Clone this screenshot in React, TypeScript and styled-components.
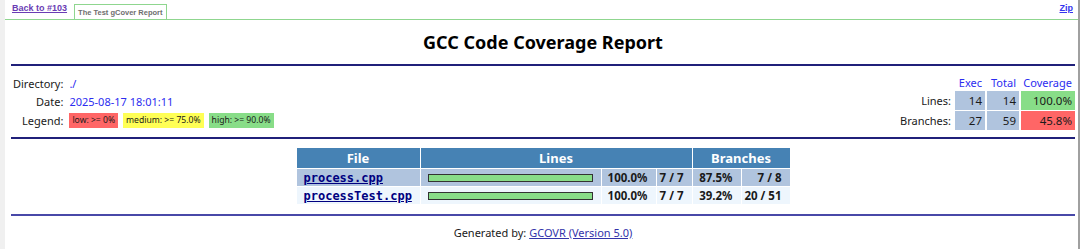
import React from 'react';
import styled, { createGlobalStyle } from 'styled-components';

const GlobalStyle = createGlobalStyle`
  html, body {
    margin: 0;
    padding: 0;
    background: #ffffff;
  }
`;

type FileRow = {
  name: string;
  linePct: string;
  lineCount: string;
  branchPct: string;
  branchCount: string;
};

const files: FileRow[] = [
  { name: 'process.cpp', linePct: '100.0%', lineCount: '7 / 7', branchPct: '87.5%', branchCount: '7 / 8' },
  { name: 'processTest.cpp', linePct: '100.0%', lineCount: '7 / 7', branchPct: '39.2%', branchCount: '20 / 51' },
];

export default function App() {
  return (
    <>
      <GlobalStyle />
      <Frame>
        <LeftStrip />
        <Main>
          <TopBar>
            <BackLink href="#">Back to #103</BackLink>
            <Tab>The Test gCover Report</Tab>
            <ZipLink href="#">Zip</ZipLink>
          </TopBar>
          <Report>
            <Title>GCC Code Coverage Report</Title>
            <Rule />
            <InfoSection>
              <InfoGrid>
                <InfoLabel>Directory:</InfoLabel>
                <InfoValue>./</InfoValue>
                <InfoLabel>Date:</InfoLabel>
                <InfoValue>2025-08-17 18:01:11</InfoValue>
                <InfoLabel>Legend:</InfoLabel>
                <LegendRow>
                  <LegendBox $level="low">low: &gt;= 0%</LegendBox>
                  <LegendBox $level="medium">medium: &gt;= 75.0%</LegendBox>
                  <LegendBox $level="high">high: &gt;= 90.0%</LegendBox>
                </LegendRow>
              </InfoGrid>
              <StatsGrid>
                <span />
                <StatHead>Exec</StatHead>
                <StatHead>Total</StatHead>
                <StatHead>Coverage</StatHead>
                <StatLabel>Lines:</StatLabel>
                <StatCell>14</StatCell>
                <StatCell>14</StatCell>
                <StatCell $level="high">100.0%</StatCell>
                <StatLabel>Branches:</StatLabel>
                <StatCell>27</StatCell>
                <StatCell>59</StatCell>
                <StatCell $level="low">45.8%</StatCell>
              </StatsGrid>
            </InfoSection>
            <Rule />
            <FileTable>
              <thead>
                <tr>
                  <HeadCell>File</HeadCell>
                  <HeadCell colSpan={3}>Lines</HeadCell>
                  <HeadCell colSpan={2}>Branches</HeadCell>
                </tr>
              </thead>
              <tbody>
                {files.map((f, i) => (
                  <FileTr key={f.name} $odd={i % 2 === 0}>
                    <NameCell>
                      <FileLink href="#">{f.name}</FileLink>
                    </NameCell>
                    <BarCell>
                      <Bar />
                    </BarCell>
                    <NumCell $w={54}>{f.linePct}</NumCell>
                    <NumCell $w={35}>{f.lineCount}</NumCell>
                    <NumCell $w={48}>{f.branchPct}</NumCell>
                    <NumCell $w={48}>{f.branchCount}</NumCell>
                  </FileTr>
                ))}
              </tbody>
            </FileTable>
            <Rule $bottom />
            <Footer>
              Generated by: <FooterLink href="#">GCOVR (Version 5.0)</FooterLink>
            </Footer>
          </Report>
        </Main>
        <RightEdge />
      </Frame>
    </>
  );
}

const Frame = styled.div`
  display: flex;
  height: 249px;
  overflow: hidden;
`;

const LeftStrip = styled.div`
  width: 5px;
  background: #f0f0f0;
`;

const RightEdge = styled.div`
  width: 2px;
  background: #a0a0a0;
`;

const Main = styled.div`
  flex: 1;
  display: flex;
  flex-direction: column;
`;

const TopBar = styled.div`
  height: 19px;
  display: flex;
  align-items: flex-start;
  padding: 0 5px 0 7px;
  border-bottom: 1px solid #8fd68f;
  font-family: 'Liberation Sans', Arial, sans-serif;
  font-weight: bold;
`;

const BackLink = styled.a`
  margin-top: 3px;
  font-size: 9px;
  color: #6a3cb4;
  text-decoration: underline;
`;

const Tab = styled.div`
  margin: 4px 0 0 7px;
  height: 15px;
  box-sizing: border-box;
  border: 1px solid #8fd68f;
  border-bottom: none;
  padding: 3px 3px 0;
  font-size: 7.5px;
  color: #6e6e6e;
`;

const ZipLink = styled.a`
  margin: 3px 0 0 auto;
  font-size: 9px;
  color: #3434ee;
  text-decoration: underline;
`;

const Report = styled.div`
  padding: 0 3px 0 6px;
  font-family: 'Noto Sans', sans-serif;
  font-size: 11px;
  color: #1a1a1a;
`;

const Title = styled.h1`
  margin: 0;
  padding-top: 9px;
  height: 35px;
  text-align: center;
  font-size: 18px;
  font-weight: bold;
  line-height: 26px;
  color: #000;
`;

const Rule = styled.hr<{ $bottom?: boolean }>`
  margin: 0;
  height: 2px;
  border: 0;
  background: ${(p) => (p.$bottom ? '#4848a8' : '#20207a')};
`;

const InfoSection = styled.div`
  display: flex;
  justify-content: space-between;
  align-items: flex-start;
  height: 71px;
  padding-top: 7px;
  box-sizing: border-box;
`;

const InfoGrid = styled.div`
  display: grid;
  grid-template-columns: auto auto;
  grid-auto-rows: 18.5px;
  column-gap: 6px;
  align-items: center;
  padding: 1px 0 0 2px;
`;

const InfoLabel = styled.div`
  text-align: right;
  white-space: nowrap;
`;

const InfoValue = styled.div`
  color: #2c2cf0;
  white-space: nowrap;
`;

const LegendRow = styled.div`
  display: flex;
  gap: 5px;
`;

const levelColor = {
  low: '#ff6666',
  medium: '#ffff55',
  high: '#88dd88',
};

const LegendBox = styled.span<{ $level: keyof typeof levelColor }>`
  height: 15px;
  line-height: 15px;
  padding: 0 3px;
  font-size: 8.6px;
  background: ${(p) => levelColor[p.$level]};
  white-space: nowrap;
`;

const StatsGrid = styled.div`
  display: grid;
  grid-template-columns: auto 30px 32px 54px;
  grid-template-rows: 17px 19px 19px;
  gap: 1px 2px;
`;

const StatHead = styled.div`
  color: #2c2cf0;
  text-align: right;
  align-self: end;
  padding-right: 3px;
  line-height: 14px;
  white-space: nowrap;
`;

const StatLabel = styled.div`
  text-align: right;
  padding-right: 2px;
  line-height: 19px;
  white-space: nowrap;
`;

const StatCell = styled.div<{ $level?: 'low' | 'high' }>`
  background: ${(p) => (p.$level ? levelColor[p.$level] : '#b0c4de')};
  text-align: right;
  padding-right: 3px;
  line-height: 19px;
  font-size: 11.5px;
  white-space: nowrap;
`;

const FileTable = styled.table`
  margin: 8px auto 9px;
  border-spacing: 1px;
  font-size: 11.5px;
`;

const HeadCell = styled.th`
  background: #4682b4;
  color: #ffffff;
  font-size: 13px;
  font-weight: bold;
  height: 20px;
  padding: 0;
  line-height: 20px;
  text-align: center;
`;

const FileTr = styled.tr<{ $odd: boolean }>`
  background: ${(p) => (p.$odd ? '#b0c4de' : '#eef6fd')};
  height: 17px;
`;

const NameCell = styled.td`
  width: 116px;
  padding: 0 0 0 7px;
  white-space: nowrap;
`;

const FileLink = styled.a`
  font-family: 'DejaVu Sans Mono', monospace;
  font-weight: bold;
  font-size: 12px;
  color: #000080;
  text-decoration: underline;
`;

const BarCell = styled.td`
  width: 180px;
  padding: 0;
  text-align: center;
  vertical-align: middle;
`;

const Bar = styled.div`
  width: 163px;
  height: 6px;
  margin: 1px auto 0;
  border: 1px solid #333;
  background: #88dd88;
`;

const NumCell = styled.td<{ $w: number }>`
  width: ${(p) => p.$w - 8}px;
  padding: 0 8px 0 0;
  text-align: right;
  font-weight: bold;
  white-space: nowrap;
  line-height: 17px;
`;

const Footer = styled.div`
  text-align: center;
  padding-top: 9px;
`;

const FooterLink = styled.a`
  color: #3333aa;
  text-decoration: underline;
`;
